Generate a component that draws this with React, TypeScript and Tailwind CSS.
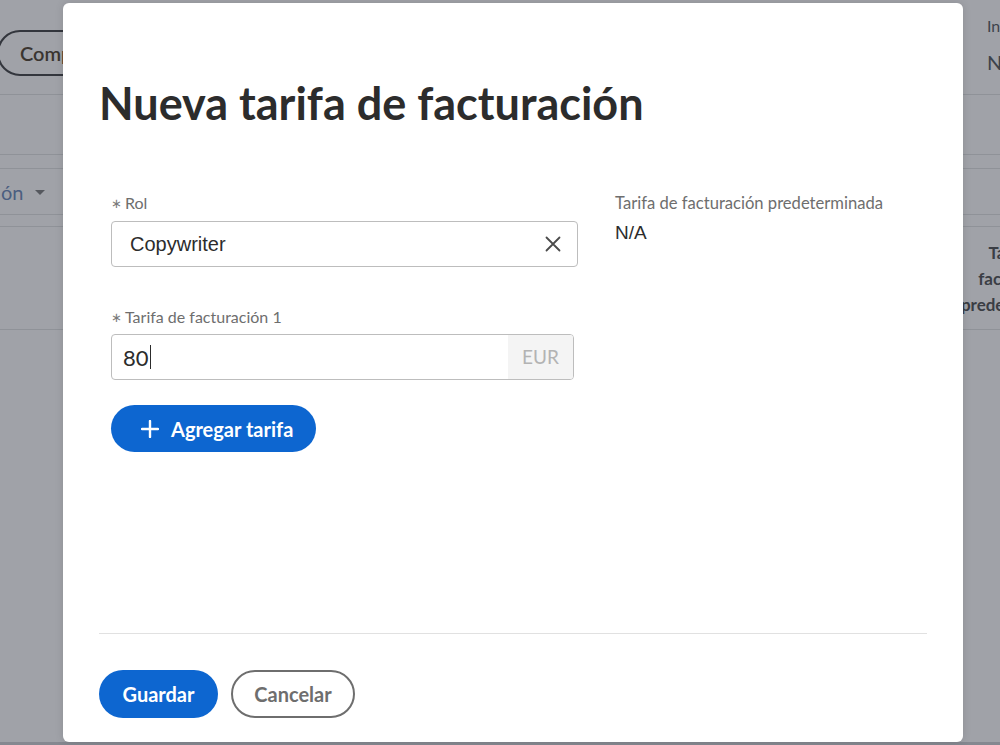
import React from "react";

const sans = { fontFamily: "Lato, 'Open Sans', sans-serif" };
const arial = { fontFamily: "'Liberation Sans', Arial, sans-serif" };

function Background() {
  return (
    <div className="absolute inset-0 overflow-hidden bg-[#a0a2a8]" style={sans}>
      <div className="flex h-[95px] items-start justify-between border-b border-[#8f9298]">
        <div className="mt-[30px] -ml-[3px] flex h-[46px] items-center rounded-full border-2 border-[#33363d] pl-[21px] pr-[30px] text-[20px] font-semibold text-[#3a3530]">
          Compartir
        </div>
        <div className="mt-[16px] flex w-[13px] flex-col overflow-visible whitespace-nowrap text-[#3d424b]">
          <span className="text-[16px] leading-[20px]">In</span>
          <span className="mt-[14px] text-[20px] leading-[24px]">N</span>
        </div>
      </div>
      <div className="h-[60px] border-b border-[#8f9298]" />
      <div className="mt-[13px] flex h-[47px] items-center border-y border-[#8f9298]">
        <span className="ml-[1px] text-[20px] text-[#4b5e80]">ón</span>
        <span className="ml-[11px] mt-[2px] h-0 w-0 border-x-[5px] border-t-[5px] border-x-transparent border-t-[#55585e]" />
      </div>
      <div className="mt-[11px] flex h-[104px] border-y border-[#8f9298] pt-[13px]">
        <div className="ml-[954px] flex w-[134px] shrink-0 flex-col items-center whitespace-nowrap text-[17px] font-bold leading-[26px] text-[#3a3d44]">
          <span>Tarifa de</span>
          <span>facturación</span>
          <span>predeterminada</span>
        </div>
      </div>
      <div className="absolute bottom-0 left-0 right-0 h-[3px] bg-[#858890]" />
    </div>
  );
}

function XIcon() {
  return (
    <svg width="16" height="16" viewBox="0 0 16 16" fill="none">
      <path d="M1.5 1.5 L14.5 14.5 M14.5 1.5 L1.5 14.5" stroke="#4b4b4b" strokeWidth="1.8" strokeLinecap="round" />
    </svg>
  );
}

function PlusIcon() {
  return (
    <svg width="18" height="18" viewBox="0 0 18 18" fill="none">
      <path d="M9 1 V17 M1 9 H17" stroke="white" strokeWidth="2.4" strokeLinecap="round" />
    </svg>
  );
}

function Label({ children }: { children: React.ReactNode }) {
  return (
    <div className="flex items-center text-[16px] leading-[20px] text-[#6e6e6e]" style={sans}>
      <span className="mr-[3px] text-[13px] text-[#7a7a7a]">∗</span>
      <span>{children}</span>
    </div>
  );
}

export default function App() {
  return (
    <div className="relative h-[745px] w-[1000px] overflow-hidden">
      <Background />
      <div
        className="absolute left-[63px] top-[3px] flex h-[739px] w-[900px] flex-col rounded-[6px] bg-white px-[36px] pb-[24px] pt-[73px] shadow-[0_0_8px_rgba(0,0,0,0.12)]"
        style={sans}
      >
        <h1 className="text-[45px] font-bold leading-[54px] text-[#2c2c2c]">Nueva tarifa de facturación</h1>

        <div className="mt-[63px] flex pl-[12px]">
          <div className="flex w-[467px] flex-col">
            <Label>Rol</Label>
            <div className="mt-[8px] flex h-[46px] items-center justify-between rounded-[4px] border border-[#bdbdbd] pl-[18px] pr-[16px]">
              <span className="text-[20px] text-[#2c2c2c]" style={arial}>Copywriter</span>
              <XIcon />
            </div>

            <div className="mt-[40px]">
              <Label>Tarifa de facturación 1</Label>
            </div>
            <div className="mt-[7px] flex h-[46px] w-[463px] overflow-hidden rounded-[4px] border border-[#bdbdbd]">
              <div className="flex flex-1 items-center pl-[11px]">
                <span className="text-[22px] text-[#2c2c2c]">80</span>
                <span className="ml-[1px] h-[24px] w-[1px] bg-[#2c2c2c]" />
              </div>
              <div className="flex w-[65px] items-center justify-center bg-[#f4f4f4] text-[19px] text-[#b3b3b3]">EUR</div>
            </div>

            <button className="mt-[25px] flex h-[47px] w-[205px] items-center gap-[12px] rounded-full bg-[#0d66d0] pl-[30px] text-[20px] font-bold text-white">
              <PlusIcon />
              <span>Agregar tarifa</span>
            </button>
          </div>

          <div className="ml-[37px] flex flex-col">
            <div className="text-[16.6px] leading-[20px] text-[#6e6e6e]">Tarifa de facturación predeterminada</div>
            <div className="mt-[9px] text-[19px] leading-[22px] text-[#2c2c2c]" style={arial}>N/A</div>
          </div>
        </div>

        <div className="flex-1" />
        <div className="h-px bg-[#e1e1e1]" />
        <div className="mt-[36px] flex gap-[13px]">
          <button className="flex h-[48px] w-[119px] items-center justify-center rounded-full bg-[#0d66d0] text-[20px] font-bold text-white">
            Guardar
          </button>
          <button className="flex h-[48px] w-[124px] items-center justify-center rounded-full border-2 border-[#6e6e6e] text-[20px] font-bold text-[#6e6e6e]">
            Cancelar
          </button>
        </div>
      </div>
    </div>
  );
}
